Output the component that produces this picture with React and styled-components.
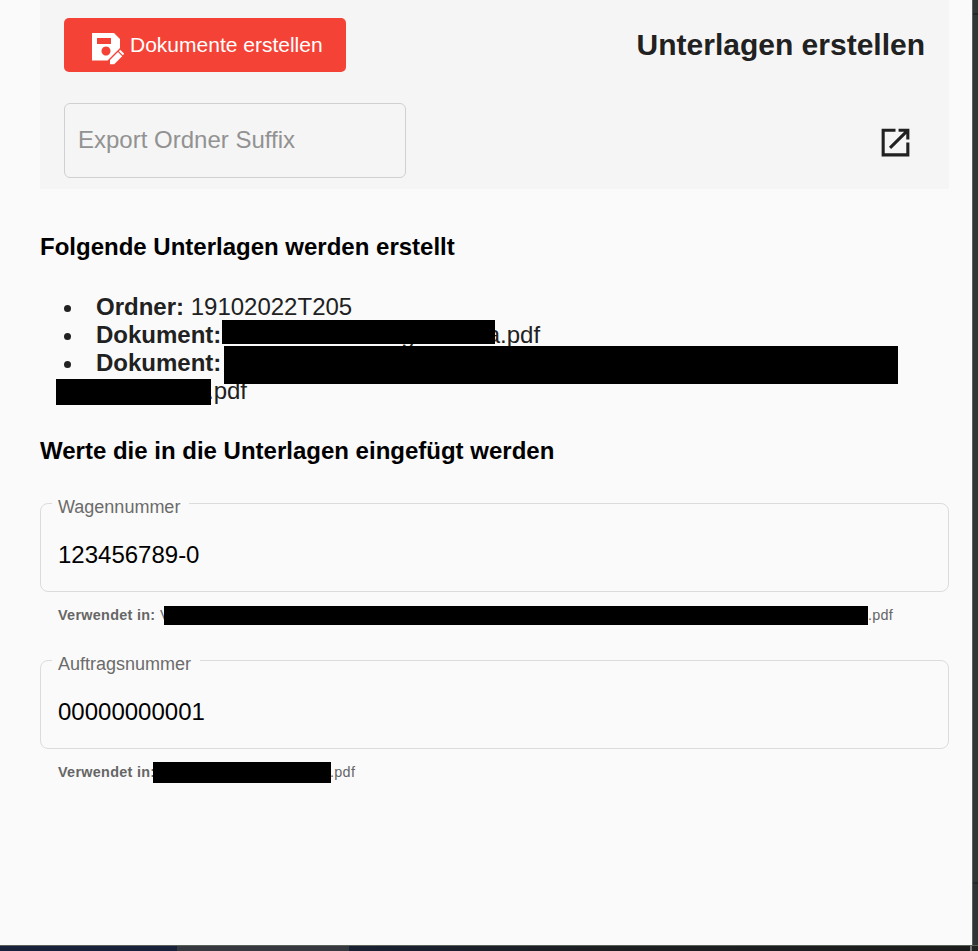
import React from "react";
import styled, { createGlobalStyle } from "styled-components";

const Global = createGlobalStyle`
  *{box-sizing:border-box}
  html,body{margin:0;padding:0;background:#fafafa;overflow:hidden}
  body{font-family:"Liberation Sans",Arial,sans-serif;font-size:24px;color:#212121}
`;
const Window = styled.div`
  display:grid;grid-template-columns:972px 6px;grid-template-rows:945px 6px;
  width:978px;height:951px;
`;
const Page = styled.main`padding:0 23px 0 40px;background:#fafafa;`;
const SideEdge = styled.div`
  border-left:1px solid #5c5f5f;
  background:linear-gradient(#303535 0 13px,#242626 13px 15px,#303535 15px 882px,#252626 882px 884px,#303336 884px);
`;
const BottomEdge = styled.div`
  grid-column:1 / -1;border-top:1px solid #586058;
  background:linear-gradient(90deg,#17223a 0 177px,#35383f 177px 349px,#182033 349px,#1c1e20 600px,#1c1c1c 970px,#777 970px 972px,#222 972px);
`;
const Header = styled.header`
  height:189px;padding:18px 24px 0;background:#f5f5f5;
`;
const Bar = styled.div`
  display:flex;justify-content:space-between;align-items:flex-start;
  margin-bottom:31px;
`;
const Button = styled.button`
  display:flex;align-items:center;width:282px;height:54px;padding:0 0 0 26px;
  border:0;border-radius:5px;background:#f44336;color:#fff;
  font:21px "Liberation Sans",Arial,sans-serif;
  svg{width:34px;height:34px;margin:6px 6px 0 0;flex:none}
`;
const Title = styled.h1`
  margin:8px 0 0;font-size:30px;line-height:38px;font-weight:700;white-space:nowrap;
`;
const SuffixInput = styled.input`
  width:342px;height:75px;padding:0 13px 2px;border:1px solid #d0d0d0;border-radius:6px;
  background:transparent;font:24px "Liberation Sans",Arial,sans-serif;outline:0;
  &::placeholder{color:#929292;opacity:1}
`;
const OpenIcon = styled.svg`width:37px;height:37px;margin:21px 11px 0 0;`;
const Heading = styled.h2`
  margin:${p => p.$top}px 0 0;font-size:24px;line-height:28px;font-weight:700;color:#000;white-space:nowrap;
`;
const List = styled.ul`list-style:none;margin:32px 0 0;padding:0 0 0 16px;`;
const Item = styled.li`
  display:flex;height:28px;line-height:28px;white-space:pre;
`;
const Bullet = styled.span`
  width:7px;height:7px;border-radius:50%;background:#212121;margin:12px 25px 0 8px;
`;
const Name = styled.span`position:relative;padding-left:${p => p.$pad || 0}px;`;
const Redaction = styled.span`
  position:absolute;z-index:1;background:#000;
  left:${p => p.$x}px;top:${p => p.$y}px;width:${p => p.$w}px;height:${p => p.$h}px;
`;
const Field = styled.fieldset`
  margin:${p => p.$top}px 0 0;padding:0 17px;width:909px;height:101px;
  border:1px solid #dcdcdc;border-radius:8px;min-width:0;
  legend{margin-left:-6px;padding:7px 9px 0 6px;height:25px;line-height:18px;font-size:18px;color:#6b6b6b}
  input{display:block;width:100%;height:28px;margin-top:25px;padding:0;border:0;outline:0;background:transparent;
    color:#000;font:24px "Liberation Sans",Arial,sans-serif}
`;
const Usage = styled.div`
  position:relative;display:flex;height:20px;margin:13px 0 0 18px;
  font-size:14.4px;line-height:20px;letter-spacing:.3px;color:#666;white-space:pre;
  b{width:102px}
`;
const Rest = styled.span`margin-left:${p => p.$left}px;`;

const SaveEdit = () => (
  <svg viewBox="0 0 34 34" fill="#fff">
    <path fillRule="evenodd" d="M2 2h22l6 6v9L17.5 29.5H2zM7 7v6h14V7zM16 15.5a4.5 4.5 0 1 0 .01 0z" />
    <path d="M20 29l8-8 4.2 4.2-8 8H20zM28.8 20.2l1.4-1.4 4 4-1.4 1.4z" />
  </svg>
);

export default function App() {
  return (
    <>
      <Global />
      <Window>
        <Page>
          <Header>
            <Bar>
              <Button><SaveEdit /><span>Dokumente erstellen</span></Button>
              <Title>Unterlagen erstellen</Title>
            </Bar>
            <Bar>
              <SuffixInput placeholder="Export Ordner Suffix" />
              <OpenIcon viewBox="0 0 24 24" fill="#212121">
                <path d="M19 19H5V5h7V3H3v18h18v-9h-2zM14 3v2h3.59l-9.83 9.83 1.41 1.41L19 6.41V10h2V3z" />
              </OpenIcon>
            </Bar>
          </Header>
          <Heading $top={44}>Folgende Unterlagen werden erstellt</Heading>
          <List>
            <Item><Bullet /><b>Ordner: </b><span>19102022T205</span></Item>
            <Item>
              <Bullet /><b>Dokument:</b>
              <Name $pad={180}>g<Rest $left={72}>a.pdf</Rest><Redaction $x={1} $y={-1} $w={273} $h={24} /></Name>
            </Item>
            <Item>
              <Bullet /><b>Dokument:</b>
              <Name><Redaction $x={3} $y={-3} $w={674} $h={38} /></Name>
            </Item>
            <Item>
              <Name $pad={151}>.pdf<Redaction $x={0} $y={2} $w={155} $h={26} /></Name>
            </Item>
          </List>
          <Heading $top={32}>Werte die in die Unterlagen eingefügt werden</Heading>
          <Field $top={26}><legend>Wagennummer</legend><input defaultValue="123456789-0" /></Field>
          <Usage>
            <b>Verwendet in:</b>V<Rest $left={698}>.pdf</Rest>
            <Redaction $x={106} $y={1} $w={704} $h={19} />
          </Usage>
          <Field $top={23}><legend>Auftragsnummer</legend><input defaultValue="00000000001" /></Field>
          <Usage>
            <b>Verwendet in:</b><Rest $left={170}>.pdf</Rest>
            <Redaction $x={95} $y={0} $w={178} $h={21} />
          </Usage>
        </Page>
        <SideEdge />
        <BottomEdge />
      </Window>
    </>
  );
}
